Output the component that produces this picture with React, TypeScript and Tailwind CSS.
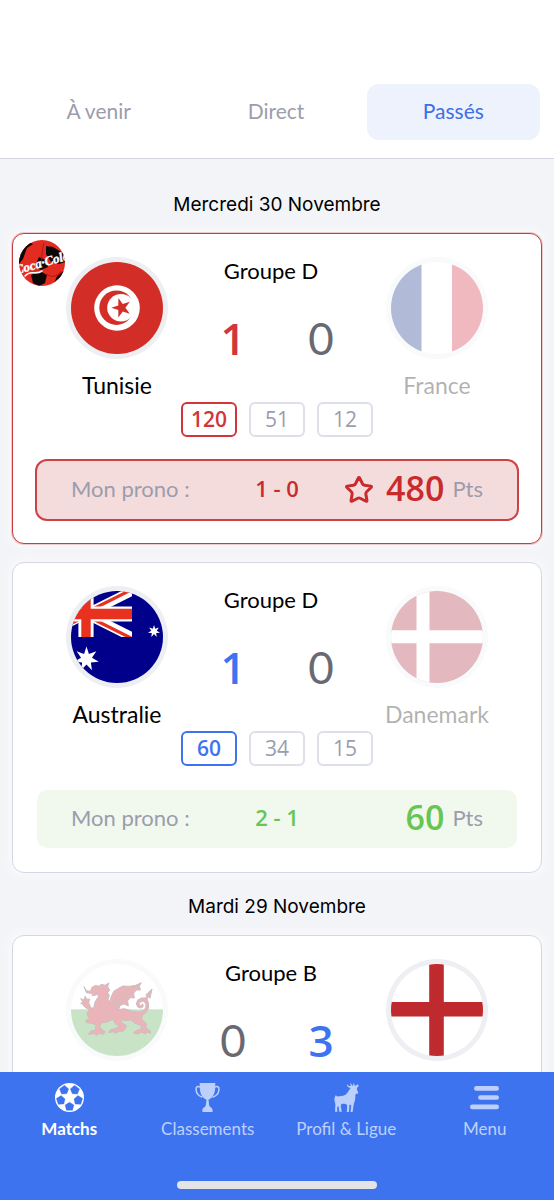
import { useState } from "react";
import { Star } from "lucide-react";
import clsx from "clsx";

type Tone = "red" | "blue" | "green";
type Country = "tunisia" | "france" | "australia" | "denmark" | "wales" | "england";

interface Team {
  name: string;
  flag: Country;
  score: number;
}

interface Match {
  id: number;
  group: string;
  home: Team;
  away: Team;
  odds: number[];
  sponsored?: boolean;
  prono: { score: string; points: number; tone: Tone };
}

const days: { date: string; matches: Match[] }[] = [
  {
    date: "Mercredi 30 Novembre",
    matches: [
      {
        id: 1,
        group: "Groupe D",
        home: { name: "Tunisie", flag: "tunisia", score: 1 },
        away: { name: "France", flag: "france", score: 0 },
        odds: [120, 51, 12],
        sponsored: true,
        prono: { score: "1 - 0", points: 480, tone: "red" },
      },
      {
        id: 2,
        group: "Groupe D",
        home: { name: "Australie", flag: "australia", score: 1 },
        away: { name: "Danemark", flag: "denmark", score: 0 },
        odds: [60, 34, 15],
        prono: { score: "2 - 1", points: 60, tone: "green" },
      },
    ],
  },
  {
    date: "Mardi 29 Novembre",
    matches: [
      {
        id: 3,
        group: "Groupe B",
        home: { name: "Pays de Galles", flag: "wales", score: 0 },
        away: { name: "Angleterre", flag: "england", score: 3 },
        odds: [72, 45, 18],
        prono: { score: "0 - 2", points: 18, tone: "green" },
      },
    ],
  },
];

// Regular star / polygon points, angle in degrees for the first tip
function starPoints(cx: number, cy: number, outer: number, inner: number, tips: number, start: number) {
  return Array.from({ length: tips * 2 }, (_, i) => {
    const r = i % 2 === 0 ? outer : inner;
    const a = ((start + (i * 180) / tips) * Math.PI) / 180;
    return `${(cx + r * Math.cos(a)).toFixed(2)},${(cy + r * Math.sin(a)).toFixed(2)}`;
  }).join(" ");
}

function FlagArt({ flag }: { flag: Country }) {
  switch (flag) {
    case "tunisia":
      return (
        <svg viewBox="0 0 92 92" className="size-full">
          <rect width="92" height="92" fill="#d32d27" />
          <circle cx="46" cy="46" r="22.8" fill="#fff" />
          <circle cx="45.5" cy="45.7" r="17.2" fill="#d32d27" />
          <circle cx="50" cy="45.7" r="13.8" fill="#fff" />
          <polygon points={starPoints(50.5, 45.7, 10.2, 3.9, 5, 180)} fill="#d32d27" />
        </svg>
      );
    case "france":
      return (
        <svg viewBox="0 0 92 92" className="size-full">
          <rect width="92" height="92" fill="#fff" />
          <rect width="30.5" height="92" fill="#00207d" />
          <rect x="61" width="31" height="92" fill="#ce1730" />
        </svg>
      );
    case "australia":
      return (
        <svg viewBox="0 0 92 92" className="size-full">
          <rect width="92" height="92" fill="#00008b" />
          <clipPath id="canton">
            <rect x="-31" width="92" height="46" />
          </clipPath>
          <g clipPath="url(#canton)">
            <path d="M-31 0 61 46M-31 46 61 0" stroke="#fff" strokeWidth="9.4" />
            <path d="M15 24.5 61 47.5M15 21.5 61 -1.5M-31 48 15 25" stroke="#e8321f" strokeWidth="3.2" />
            <path d="M15 0V46M-31 23H61" stroke="#fff" strokeWidth="15.2" />
            <path d="M15 0V46" stroke="#e8321f" strokeWidth="9.4" />
            <path d="M-31 23H61" stroke="#e8321f" strokeWidth="10.6" />
          </g>
          <polygon points={starPoints(15.5, 68, 12.6, 5.6, 7, -90)} fill="#fff" />
          <polygon points={starPoints(83, 40.3, 6.2, 2.8, 7, -90)} fill="#fff" />
        </svg>
      );
    case "denmark":
      return (
        <svg viewBox="0 0 92 92" className="size-full">
          <rect width="92" height="92" fill="#a5162f" />
          <path d="M32 0V92M0 45.8H92" stroke="#fff" strokeWidth="13" />
        </svg>
      );
    case "wales":
      return (
        <svg viewBox="216 106 276 276" className="size-full">
          <rect x="216" y="106" width="276" height="276" fill="#fff" />
          <rect x="216" y="242" width="276" height="140" fill="#4ea545" />
          <g fill="#bb0c1c" stroke="#5f2733" strokeWidth="3" strokeLinejoin="round">
            {/* body, head and legs */}
            <path d="M255 174 262 186 274 188 279 176 290 170 298 173 308 167 318 170 330 163 326 174 332 184 326 192 331 200 327 212 338 228 352 244 376 240 398 247 418 250 432 246 440 238 441 226 434 218 425 219 420 225 424 232 430 230 429 225 434 231 428 238 417 236 412 226 416 214 428 208 440 208 446 197 440 199 459 181 453 209 450 202 444 211 449 224 448 240 440 252 430 260 428 272 442 284 441 299 453 306 455 314 446 310 440 316 428 311 416 316 403 312 412 306 427 301 426 290 408 284 396 274 380 276 366 274 370 284 382 290 380 300 372 308 360 308 350 314 342 309 329 312 334 303 348 300 361 293 348 284 342 272 326 280 308 282 302 294 310 304 319 309 312 318 302 313 292 320 284 314 269 318 274 308 290 304 290 288 278 284 262 282 260 274 273 272 266 262 265 252 272 244 258 236 250 226 245 224 252 221 245 210 255 214 258 203 264 212 272 211 269 222 276 238 284 238 288 220 298 204 296 196 288 200 278 200 286 194 276 194 262 192Z" />
            {/* wing */}
            <path d="M330 226 336 206 344 188 360 178 372 172 392 173 410 170 427 162 421 172 424 184 412 184 404 194 406 208 394 207 386 216 388 232 376 226 364 230 358 244 344 240Z" />
            <path d="M340 226 C356 200 386 180 420 171M344 230 C362 208 384 196 402 194M350 236 C362 220 374 214 386 214" fill="none" />
            <path d="M300 226 C304 244 318 258 336 266M384 252 C392 262 408 268 420 266M306 180 318 184" fill="none" />
          </g>
        </svg>
      );
    case "england":
      return (
        <svg viewBox="0 0 92 92" className="size-full">
          <rect width="92" height="92" fill="#fff" />
          <path d="M45.5 0V92M0 45.3H92" stroke="#be2a2d" strokeWidth="14.6" />
        </svg>
      );
  }
}

function TeamColumn({ team, lost }: { team: Team; lost: boolean }) {
  return (
    <div className={clsx("flex flex-col items-center", lost && "opacity-30")}>
      <div className="size-[102px] overflow-hidden rounded-full bg-[#eeeff2] p-[5px]">
        <div className="size-full overflow-hidden rounded-full">
          <FlagArt flag={team.flag} />
        </div>
      </div>
      <p className="mt-3 text-[23px] leading-7 whitespace-nowrap">{team.name}</p>
    </div>
  );
}

function SponsorBall() {
  return (
    <svg viewBox="0 0 46 46" className="absolute top-1.5 left-1.5 size-[46px]" aria-hidden="true">
      <clipPath id="ball">
        <circle cx="23" cy="23" r="23" />
      </clipPath>
      <g clipPath="url(#ball)">
        <rect width="46" height="46" fill="#e32b22" />
        <path d="M6 0 0 8 0 24 4 19 8 8 14 4ZM27 6 34 7 44 13 46 22 40 24 32 22 27 14ZM20 17 27 20 29 27 22 30 16 26ZM12 35 21 31 28 35 26 43 20 46 14 43ZM38 36 46 30V46H34Z" fill="#0b0807" />
        <path d="M25 3C22 12 24 20 20 30M28 34C32 38 38 37 42 31" stroke="#b3170f" strokeWidth="1" fill="none" />
        <text
          x="23"
          y="27"
          textAnchor="middle"
          transform="rotate(-16 23 23)"
          fill="#fff"
          stroke="#fff"
          strokeWidth="0.4"
          fontSize="13"
          className="font-['Liberation_Serif',serif] font-bold italic"
        >
          Coca·Cola
        </text>
        <path d="M6 36C12 29 16 36 23 31" stroke="#fff" strokeWidth="1.6" fill="none" strokeLinecap="round" />
        <path d="M38 40 46 34V46H32Z" fill="#fff" />
      </g>
    </svg>
  );
}

const pronoStyles: Record<Tone, { box: string; text: string }> = {
  red: { box: "bg-[#f4dcdc] ring-2 ring-[#cc4246]", text: "text-[#c92a2c]" },
  blue: { box: "bg-[#eef2fc]", text: "text-[#3e73f0]" },
  green: { box: "bg-[#f1f9ee]", text: "text-[#67c553]" },
};

function Score({ value, winner, accent }: { value: number; winner: boolean; accent: string }) {
  return (
    <span className={winner ? clsx("font-['Open_Sans',sans-serif] font-semibold", accent) : "text-[#696972]"}>
      {value}
    </span>
  );
}

function MatchCard({ match }: { match: Match }) {
  const { home, away, prono, sponsored } = match;
  const homeWins = home.score > away.score;
  const awayWins = away.score > home.score;
  const accent = sponsored ? "text-[#d2353a]" : "text-[#3e73f0]";
  const accentBorder = sponsored ? "border-[#d2353a]" : "border-[#3e73f0]";
  const winningOdd = homeWins ? 0 : awayWins ? 2 : 1;
  const style = pronoStyles[prono.tone];

  return (
    <article
      className={clsx(
        "relative rounded-xl border bg-white px-6 pt-[23px] pb-6 shadow-[0_0_10px_3px_#f9fafc]",
        sponsored ? "border-[#cb3a3e] ring-1 ring-[#cf4448]/25" : "border-[#d5d6e5]"
      )}
    >
      {sponsored && <SponsorBall />}

      <div className="grid grid-cols-3">
        <TeamColumn team={home} lost={awayWins} />
        <div className="flex flex-col items-center">
          <p className="pr-3 text-[22px] leading-7">{match.group}</p>
          <div className="mt-[31px] grid w-44 grid-cols-2 text-center text-[44px] leading-[44px]">
            <Score value={home.score} winner={homeWins} accent={accent} />
            <Score value={away.score} winner={awayWins} accent={accent} />
          </div>
        </div>
        <TeamColumn team={away} lost={homeWins} />
      </div>

      <ul className="mt-[3px] flex justify-center gap-3">
        {match.odds.map((odd, i) => (
          <li
            key={i}
            className={clsx(
              "flex h-[35px] w-14 items-center justify-center rounded-md border-2 pb-0.5 font-['Open_Sans',sans-serif] text-[21px] leading-7",
              i === winningOdd ? clsx("font-semibold", accent, accentBorder) : "border-[#dedfe9] text-[#9b9dad]"
            )}
          >
            {odd}
          </li>
        ))}
      </ul>

      <div
        className={clsx(
          "mt-6 grid h-[58px] grid-cols-[1fr_auto_1fr] items-center rounded-[10px] px-[34px] pb-1",
          style.box
        )}
      >
        <span className="text-[22px] text-[#9b9dad]">Mon prono :</span>
        <span className={clsx("font-['Open_Sans',sans-serif] text-[22px] font-semibold", style.text)}>{prono.score}</span>
        <div className="flex items-center justify-end">
          {sponsored && <Star className="mt-1 mr-3 size-[30px] text-[#c92a2c]" strokeWidth={2.4} />}
          <strong className={clsx("font-['Open_Sans',sans-serif] text-[34px] leading-10 font-semibold", style.text)}>
            {prono.points}
          </strong>
          <span className="ml-2 text-[22px] text-[#9b9dad]">Pts</span>
        </div>
      </div>
    </article>
  );
}

function BallIcon() {
  return (
    <svg viewBox="0 0 86 86" className="size-[29px]" aria-hidden="true">
      <circle cx="43" cy="43" r="43" fill="currentColor" />
      {[90, 162, 234, 306, 18].map((angle) => (
        <polygon
          key={angle}
          points="14,0 22,-13 38,-9 38,9 22,13"
          transform={`translate(43 43) rotate(${angle})`}
          fill="#3e73f0"
          stroke="#3e73f0"
          strokeWidth="1"
          strokeLinejoin="round"
        />
      ))}
    </svg>
  );
}

function TrophyIcon() {
  return (
    <svg viewBox="0 0 86 86" className="size-[29px]" aria-hidden="true" fill="currentColor">
      <path d="M20 0H66V10C66 30 60 44 46 50L48 66C50 73 58 73 58 80V86H28V80C28 73 36 73 38 66L40 50C26 44 20 30 20 10Z" />
      <path d="M21 12C14 8 8 11 9 20 10 32 18 39 28 42M65 12C72 8 78 11 77 20 76 32 68 39 58 42" fill="none" stroke="currentColor" strokeWidth="4.5" />
    </svg>
  );
}

function GoatIcon() {
  return (
    <svg viewBox="172 54 86 86" className="size-[29px]" aria-hidden="true" fill="currentColor">
      <path d="M183 90 188 94C196 92 206 93 213 88 220 82 223 74 227 69L222 67C218 66 216 62 216 58L222 63 229 63C226 60 226 57 227 54L233 62 236 62C234 59 235 56 236 54L240 62 246 60 249 57 251 63 246 69 246 74 250 82 248 86 243 86 241 90C242 100 240 108 237 114L233 140H227L229 120 224 118 222 140H216L217 119C212 115 206 115 200 116L198 122 201 139H194L191 122 187 126 188 139H181L182 118 179 104C179 98 181 94 183 90Z" />
    </svg>
  );
}

function MenuIcon() {
  return (
    <svg viewBox="0 0 86 86" className="size-[29px]" aria-hidden="true" fill="currentColor">
      <rect x="12" y="9" width="74" height="14" rx="7" />
      <rect x="24" y="36" width="62" height="14" rx="7" />
      <rect x="0" y="64" width="86" height="14" rx="7" />
    </svg>
  );
}

const navItems = [
  { label: "Matchs", icon: BallIcon },
  { label: "Classements", icon: TrophyIcon },
  { label: "Profil & Ligue", icon: GoatIcon },
  { label: "Menu", icon: MenuIcon },
];

const tabs = ["À venir", "Direct", "Passés"];

export default function App() {
  const [activeTab, setActiveTab] = useState("Passés");

  return (
    <div className="flex h-screen flex-col bg-[#f3f4f7] font-[Lato,sans-serif] text-black">
      <header className="border-b border-[#d3d3e4] bg-white pt-[84px] pr-3.5 pb-[18px] pl-3">
        <div className="grid grid-cols-3 gap-1">
          {tabs.map((tab) => (
            <button
              key={tab}
              type="button"
              onClick={() => setActiveTab(tab)}
              className={clsx(
                "h-14 rounded-xl pb-0.5 text-[21px]",
                tab === activeTab ? "bg-[#eef2fc] text-[#3e6fe6]" : "text-[#9b9dad]"
              )}
            >
              {tab}
            </button>
          ))}
        </div>
      </header>

      <main className="min-h-0 flex-1 overflow-y-auto px-3 pt-3 [scrollbar-width:none]">
        {days.map((day) => (
          <section key={day.date}>
            <h2 className="pt-5 pb-3.5 text-center font-[Inter,sans-serif] text-[19px] leading-7">{day.date}</h2>
            <div className="flex flex-col gap-[18px]">
              {day.matches.map((match) => (
                <MatchCard key={match.id} match={match} />
              ))}
            </div>
          </section>
        ))}
      </main>

      <nav className="bg-[#3e73f0] pt-[11px] pb-[11px]">
        <div className="grid grid-cols-4">
          {navItems.map(({ label, icon: Icon }, i) => (
            <a
              key={label}
              href="#"
              className={clsx(
                "flex flex-col items-center gap-[5px] text-[17px] leading-6",
                i === 0 ? "font-bold text-white" : "text-[#bdd0fb]"
              )}
            >
              <Icon />
              {label}
            </a>
          ))}
        </div>
        <div className="mx-auto mt-10 h-2 w-[36%] rounded-full bg-[#e4e4e6]" />
      </nav>
    </div>
  );
}
